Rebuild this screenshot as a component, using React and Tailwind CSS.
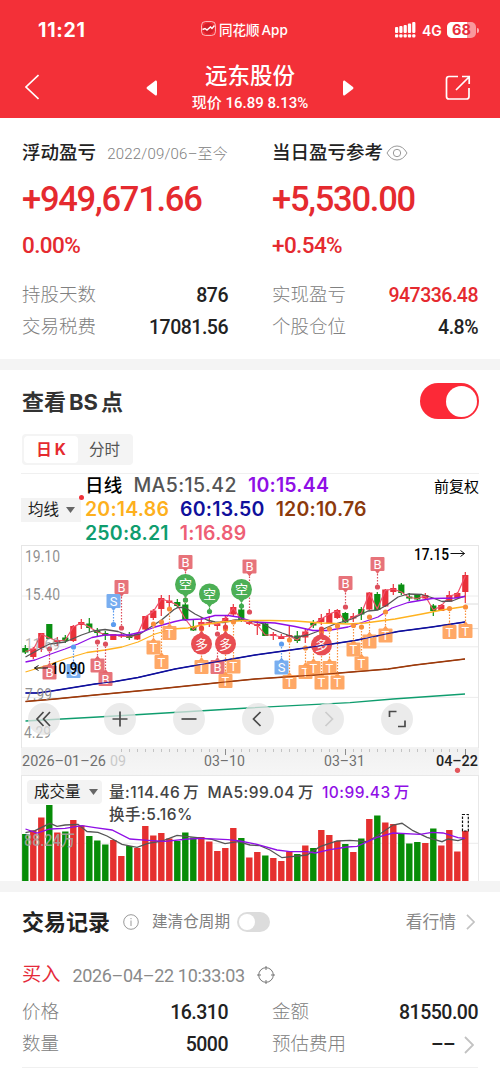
import clsx from "clsx";

// x of every candle is START + index * STEP, y values are screen rows
const START = 25.3;
const STEP = 8;

// [up, bodyTop, bodyBottom, wickTop, wickBottom, volumeTop]
const days = [
  [0, 648, 652.5, 645, 654, 834],
  [1, 648.5, 657, 647, 659, 830.5],
  [1, 633, 648, 633, 652, 817.5],
  [0, 624, 639, 624, 639, 805],
  [1, 640, 642, 637, 646, 832.5],
  [0, 637.5, 641, 635, 643, 831.5],
  [1, 626, 641, 625, 642, 820],
  [1, 622, 625, 619, 629, 825.5],
  [0, 623.5, 628, 618, 632, 836],
  [0, 631, 633, 628, 637, 840.5],
  [0, 633, 635.5, 631, 640, 844.5],
  [1, 634, 640, 634, 640, 840],
  [1, 635, 636.5, 633, 638, 856],
  [0, 635, 638, 632, 640, 846],
  [1, 634, 639.5, 632, 640, 848],
  [1, 616, 629.5, 616, 630, 826],
  [1, 610.5, 618, 609, 620, 835.5],
  [1, 598, 609, 595, 616, 833],
  [1, 600.5, 603, 595, 607, 838.5],
  [0, 602, 606, 599, 608, 841],
  [0, 604.5, 620, 603, 621, 832.5],
  [0, 626, 630.5, 620, 631, 837.5],
  [1, 622, 624.5, 617, 627, 837],
  [1, 622, 623.5, 616, 627, 841.5],
  [1, 623.5, 626, 622, 630, 851],
  [1, 618, 621, 615, 627, 848],
  [1, 607, 614.5, 604, 617, 828],
  [0, 609.5, 621, 608, 622, 838],
  [1, 622, 624, 620, 625, 857.5],
  [1, 624, 626, 620, 635, 852],
  [0, 623.5, 636, 622, 636, 855.5],
  [1, 634, 636, 632, 640, 858],
  [1, 636, 639, 634, 639, 861],
  [1, 635, 636.5, 626, 638, 851.5],
  [0, 635.5, 641, 631, 643, 854],
  [1, 631.5, 637.5, 628, 643, 845.5],
  [0, 623, 625.5, 620, 628, 848],
  [1, 618, 622, 614, 625, 830],
  [1, 613, 623.5, 609, 624, 835],
  [1, 610, 618, 609, 619, 841],
  [0, 613, 622.5, 612, 623, 844],
  [1, 616, 618.5, 613, 622, 852],
  [0, 609, 614.5, 607, 620, 838.5],
  [1, 592.5, 609.5, 592, 610, 819],
  [0, 594, 610, 592, 610, 815.5],
  [1, 589.5, 606.5, 589, 607, 822.5],
  [1, 588, 592, 584, 595, 824],
  [0, 584.5, 593, 583, 595, 833],
  [0, 596.5, 598.5, 593, 601, 843.5],
  [0, 595, 599.5, 594, 601, 842],
  [1, 595, 598.5, 593, 600, 843],
  [0, 605.5, 611, 604, 616, 828.5],
  [1, 605, 611, 604, 611, 845.5],
  [1, 595, 601.5, 591, 602, 830],
  [1, 593, 598, 592, 599, 851.5],
  [1, 575, 592, 572, 603, 831],
];

const closeLine = days
  .map(([up, top, bottom], i) => `${START + i * STEP},${up ? top + 1 : bottom - 1}`)
  .join(" ");

const averages = [
  {
    color: "#555555",
    points:
      "25.5,657 41.5,648 49.5,644 65,642 81.5,635 93,631 105,629.5 118,631.5 130,636 140,634 151.5,626.5 161.5,620 174,609.5 178,607.5 185,607.5 195,614 207,620 215,622 223,622.5 235,620 245,620 263,623.5 272,629 282,633 295,637.5 308,635 320,630.5 335,624 352,619 368,611 378,610 387,605 398,597 408,594 422,594.5 433,598 442,601.5 452,601 465,596",
  },
  {
    color: "#8f0fe6",
    points:
      "25.5,662 35,660 48,655 65,649 78,644 92,637.5 105,635 128,635 142,632 155,627 175,621.5 182,620 202,619 215,615.5 228,615.5 238,617 255,622 275,623 295,626.5 313,630.5 328,630.5 348,627 362,622.5 378,617 392,608 408,602.5 432,598.5 455,598 465,596.5",
  },
  {
    color: "#ffb21f",
    points:
      "25.5,672 48,665 65,659 87,652.5 105,650 122,647 138,642 155,634 172,629 188,628 202,625 222,622 245,620.5 270,620.5 295,621 322,623 348,624 365,623 395,619 422,614 442,610 465,606.5",
  },
  {
    color: "#10109c",
    points:
      "25.5,693 38,693 55,690.5 95,684 115,681.5 138,677.5 175,669 215,662 255,655 305,648 355,640.5 398,631.5 432,627 465,622",
  },
  {
    color: "#9c3a0c",
    points: "25.5,701.5 55,699 95,695 148,690 225,682 255,679 315,675 388,669 415,665 465,659",
  },
  {
    color: "#0f9d6e",
    points: "25.5,721 98,717 182,712 248,708 350,702.7 393,699 465,694",
  },
];

const volumeAverages = [
  {
    color: "#555555",
    points:
      "25.5,832.7 35,830.7 50,823.3 57,826.3 65,825 78,824.3 87,831.5 98,832.3 107,836 122,844.3 137,847.3 148,843.3 162,841 177,835.3 195,837.3 212,839.3 225,843.7 238,841.7 250,845 260,845.7 270,850 282,857.7 307,855 320,846.7 337,841 350,840.3 367,841.7 377,836 393,825 402,823.3 413,830.7 427,837.3 442,841.7 448,839 458,840.7 465,838.3",
  },
  {
    color: "#8f0fe6",
    points:
      "25.5,829 37,833 50,829 65,828.3 82,825.7 95,827.7 112,830 130,839 148,840.3 165,841.3 188,839 202,838.3 228,839.7 240,841 257,844.3 277,850 290,851.7 307,851.7 315,853 330,849.7 347,847 357,846.3 377,837.3 393,833 420,834.3 432,832.3 443,833 458,837.7 465,838.3",
  },
];

const markColors = { B: "#e4646c", S: "#6aa5ee", T: "#ff9f55", 空: "#4caf55", 多: "#e84d52" };
const dotColors = { B: "#dd4f5c", S: "#5b9cf0", T: "#f98f3a", 空: "#3faa4d", 多: "#e8443f" };

// [label, x, y, row of the anchor dot]
const marks = [
  ["B", 121.5, 587, 628],
  ["S", 113.5, 601, 624.5],
  ["B", 185.5, 562, 600],
  ["B", 249.5, 566.5, 612],
  ["B", 345.5, 583, 607],
  ["B", 377.5, 564, 587],
  ["空", 185.5, 584.5, 600],
  ["空", 209.5, 594, 611.5],
  ["空", 241.5, 589.5, 606],
  ["B", 49.5, 672.5, 649],
  ["S", 73.5, 671, 647],
  ["B", 97.5, 665.5, 642],
  ["B", 105.5, 679, 644],
  ["T", 153.5, 647.5, 624],
  ["T", 161.5, 662, 622],
  ["T", 169.5, 633, 609],
  ["T", 201.5, 667, 629],
  ["B", 217.5, 667, 634],
  ["T", 225.5, 681, 629],
  ["T", 233.5, 666.5, 622],
  ["多", 201.5, 644, 628],
  ["多", 225.5, 644, 627],
  ["S", 281.5, 667.5, 644],
  ["T", 289.5, 682, 640],
  ["T", 305.5, 672, 648],
  ["T", 313.5, 668, 645],
  ["T", 321.5, 682.5, 632],
  ["T", 329.5, 668, 629],
  ["T", 337.5, 682.5, 626],
  ["多", 321.5, 645, 629],
  ["T", 353.5, 649.5, 625.5],
  ["T", 361.5, 663.5, 627],
  ["T", 369.5, 641.5, 617],
  ["T", 385.5, 635.5, 612],
  ["T", 449.5, 632, 608.5],
  ["T", 465.5, 631, 607],
];

const DIN = "[font-family:Roboto,'Noto_Sans_CJK_SC',sans-serif]";
const SF = "[font-family:Inter,'Noto_Sans_CJK_SC',sans-serif]";

function Mark({ mark: [label, x, y, dot] }) {
  const round = label === "空" || label === "多";
  const dir = dot > y ? 1 : -1;
  const half = round ? 10.5 : 7;
  const color = markColors[label];
  return (
    <g>
      <line
        x1={x}
        x2={x}
        y1={y + dir * half}
        y2={dot}
        stroke={dotColors[label]}
        strokeWidth="1.2"
        strokeDasharray="1.5 1.5"
      />
      <circle cx={x} cy={dot} r="2.6" fill={dotColors[label]} />
      <path
        d={`M${x - 3} ${y + dir * (half - 1)}L${x} ${y + dir * (half + 3)}L${x + 3} ${y + dir * (half - 1)}Z`}
        fill={color}
      />
      {round ? (
        <circle cx={x} cy={y} r={half} fill={color} />
      ) : (
        <rect x={x - 7} y={y - 7} width="14" height="14" rx="1" fill={color} fillOpacity="0.9" />
      )}
      <text x={x} y={y + 4.6} textAnchor="middle" fill="#fff" fontSize="13" fontWeight="400">
        {label}
      </text>
    </g>
  );
}

// text squeezed to a fixed width, glyphs included
function Label({ children, ...props }) {
  return (
    <text lengthAdjust="spacingAndGlyphs" {...props}>
      {children}
    </text>
  );
}

function PriceChart() {
  return (
    <svg width="458" height="204" viewBox="21 545 458 204" className={clsx("block", DIN)}>
      <rect x="21.5" y="545.5" width="457" height="202.5" fill="#fff" stroke="#e6e6e6" />
      {[596, 646.8, 697.4].map((y) => (
        <line key={y} x1="22" x2="478" y1={y} y2={y} stroke="#ececec" />
      ))}
      <line x1="465" x2="478" y1="604" y2="604" stroke="#dcdcdc" />
      <line x1="465" x2="478" y1="628.6" y2="628.6" stroke="#dcdcdc" />
      {days.map(([up, top, bottom, high, low], i) => (
        <g key={i} fill={up ? "#e9303a" : "#0a8f12"}>
          <rect x={START + i * STEP - 0.6} y={high} width="1.2" height={low - high} />
          <rect x={START + i * STEP - 3.1} y={top} width="6.2" height={bottom - top} />
        </g>
      ))}
      <polyline points={closeLine} fill="none" stroke="#f0506a" strokeWidth="1.2" />
      {averages.map((line) => (
        <polyline
          key={line.color}
          points={line.points}
          fill="none"
          stroke={line.color}
          strokeWidth="1.3"
          strokeLinejoin="round"
        />
      ))}
      {marks.map((mark) => (
        <Mark key={`${mark[0]}${mark[1]}`} mark={mark} />
      ))}
      {averages.slice(3, 5).map((line) => (
        <polyline key={line.color} points={line.points} fill="none" stroke={line.color} strokeWidth="1.2" />
      ))}
      <g fill="#8a8a8a" fillOpacity="0.95" fontSize="16">
        <Label x="25" y="561.5" textLength="35">19.10</Label>
        <Label x="25" y="599.5" textLength="35">15.40</Label>
        <Label x="25" y="649.5" textLength="35" fillOpacity="0.65">11.69</Label>
        <Label x="25" y="700" textLength="27">7.99</Label>
        <Label x="24" y="738" textLength="27">4.29</Label>
      </g>
      <path d="M48 668H34.5M38.5 665.5L34.5 668L38.5 670.5" fill="none" stroke="#111" />
      <Label x="51" y="674" textLength="34" fontSize="16" fontWeight="500" fill="#000">
        10.90
      </Label>
      <Label x="414" y="559.5" textLength="35" fontSize="16" fontWeight="500" fill="#000">
        17.15
      </Label>
      <path d="M450.5 553.5H464.5M460.5 550.5L464.5 553.5L460.5 556.5" fill="none" stroke="#111" />
    </svg>
  );
}

function VolumeChart() {
  return (
    <svg width="458" height="106" viewBox="21 775 458 106" className={clsx("block", DIN)}>
      <rect x="21.5" y="775.5" width="457" height="110" fill="#fff" stroke="#e8e8e8" />
      <line x1="22" x2="478" y1="843.3" y2="843.3" stroke="#ececec" />
      {days.map(([up, , , , , top], i) => (
        <rect
          key={i}
          x={START + i * STEP - 3.2}
          y={top}
          width="6.4"
          height={881 - top}
          fill={up ? "#e5302f" : "#078c07"}
        />
      ))}
      <rect
        x="462.5"
        y="814.5"
        width="5.8"
        height="16.5"
        fill="#fff"
        stroke="#111"
        strokeWidth="1.2"
        strokeDasharray="2.5 1.5"
      />
      {volumeAverages.map((line) => (
        <polyline key={line.color} points={line.points} fill="none" stroke={line.color} strokeWidth="1.3" />
      ))}
      <Label x="24" y="846" textLength="51" fontSize="16" fill="#a3a3a3" fillOpacity="0.9">
        88.24万
      </Label>
    </svg>
  );
}

function TimeAxis() {
  const ticks = [];
  for (let x = 121.5; x < 470; x += STEP) ticks.push(x);
  return (
    <svg width="458" height="26" viewBox="21 749 458 26" className={clsx("block", DIN)}>
      <defs>
        <linearGradient id="axis" x2="0" y2="1">
          <stop offset="0" stopColor="#f1f1f1" />
          <stop offset="1" stopColor="#f6f6f6" />
        </linearGradient>
      </defs>
      <rect x="21" y="749" width="458" height="26" fill="url(#axis)" />
      {ticks.map((x) => (
        <line
          key={x}
          x1={x}
          x2={x}
          y1="748"
          y2={x === 225.5 || x === 345.5 || x === 465.5 ? 755 : 752}
          stroke={x === 225.5 || x === 345.5 || x === 465.5 ? "#8c8c8c" : "#c4c4c4"}
        />
      ))}
      <g fontSize="15" fill="#707070">
        <Label x="22" y="766.3" textLength="84">2026–01–26</Label>
        <Label x="110" y="766.3" textLength="16" fill="#c9c9c9">09</Label>
        <Label x="204" y="766.3" textLength="41">03–10</Label>
        <Label x="324" y="766.3" textLength="41">03–31</Label>
        <Label x="436" y="766.3" textLength="42" fontWeight="500" fill="#222">04–22</Label>
      </g>
      <circle cx="457.5" cy="770.3" r="2.6" fill="#e2555a" />
    </svg>
  );
}

function ToolButton({ className, d, color = "#4a4a4a" }) {
  return (
    <button className={clsx("h-8 w-8 rounded-full bg-[#e4e4e4]/75", className)}>
      <svg width="32" height="32" viewBox="0 0 32 32" fill="none" stroke={color} strokeWidth="1.7">
        <path d={d} />
      </svg>
    </button>
  );
}

function Row({ label, value, valueClass = "text-[#222]", arrow }) {
  return (
    <div className="flex h-8 items-center justify-between">
      <span className="relative top-[2px] text-[18.5px] font-light text-[#808080]">{label}</span>
      <span
        className={clsx(
          "relative top-[2px] flex items-center text-[19.5px] font-medium tracking-[-0.5px]",
          valueClass
        )}
      >
        {value}
        {arrow && <Chevron className="ml-[9px] mr-1 h-[18px] w-[10px]" />}
      </span>
    </div>
  );
}

function Chevron({ className }) {
  return (
    <svg viewBox="0 0 10 18" fill="none" stroke="#c2c2c2" strokeWidth="1.8" className={className}>
      <path d="M1 1L9 9L1 17" />
    </svg>
  );
}

function Header() {
  return (
    <header className="h-[118px] bg-[#f33038] text-white">
      <div className={clsx("flex h-[60px] items-center", SF)}>
        <div className="w-[201px] pl-[38px] pt-0.5 text-[19.5px] font-bold tracking-[0.75px]">11:21</div>
        <div className="flex w-[194px] items-center">
          <svg width="15" height="15" viewBox="0 0 15 15" fill="none" stroke="#fff" className="-mt-1">
            <rect x="0.5" y="0.5" width="14" height="14" rx="4" strokeOpacity="0.65" />
            <circle cx="7.5" cy="7.5" r="5.5" fill="#d01e29" stroke="none" />
            <path d="M1.5 8.5L4 7.5L6 9L9.5 6L11 7.5L13.5 4.5" strokeWidth="1.4" />
          </svg>
          <span className="ml-[3px] text-[13.5px] font-medium">同花顺</span>
          <span className="ml-[2px] text-[13.5px] font-medium">App</span>
        </div>
        <svg width="22" height="16" viewBox="0 0 22 16" fill="#fff">
          {[5, 4, 3, 1.5, 0].map((y, i) => (
            <g key={y}>
              <rect x={i * 4.3} y={y} width="3.2" height={11 - y} rx="1" />
              <rect x={i * 4.3} y="12.2" width="3.2" height="3.2" rx="1" />
            </g>
          ))}
        </svg>
        <span className="ml-[5px] w-5 text-[14px] font-semibold">4G</span>
        <div className="relative ml-[5px] h-4 w-[29px] overflow-hidden rounded-[5px] bg-white/50">
          <div className="h-4 w-[20px] bg-white" />
          <span className="absolute inset-0 text-center text-[14.5px] font-bold leading-4 text-[#e62f3b]">68</span>
        </div>
        <div className="ml-px h-[5px] w-[2px] rounded-r bg-white/60" />
      </div>
      <div className={clsx("flex h-[58px] items-start pl-[25px]", DIN)}>
        <svg
          width="14"
          height="26"
          viewBox="0 0 14 26"
          fill="none"
          stroke="#fff"
          strokeWidth="1.6"
          className="mt-[14px]"
        >
          <path d="M13.5 1L1 13L13.5 25" />
        </svg>
        <svg width="11" height="16" viewBox="0 0 11 16" fill="#fff" className="ml-[107px] mt-5">
          <path d="M9.5 0.5Q11 0 11 2V14Q11 16 9.5 15.5L1 9Q0 8 1 7Z" />
        </svg>
        <div className="flex w-[186px] flex-col items-center">
          <div className="mt-px h-[30px] text-[22.5px] font-medium leading-[30px]">远东股份</div>
          <div className="h-5 whitespace-nowrap text-[15px] font-medium leading-6">现价 16.89 8.13%</div>
        </div>
        <svg width="11" height="16" viewBox="0 0 11 16" fill="#fff" className="mt-5">
          <path d="M1.5 0.5Q0 0 0 2V14Q0 16 1.5 15.5L10 9Q11 8 10 7Z" />
        </svg>
        <svg
          width="26"
          height="26"
          viewBox="0 0 26 26"
          fill="none"
          stroke="#fff"
          strokeWidth="1.7"
          className="ml-[91px] mt-[15px]"
        >
          <path d="M13 1.5H4Q1.5 1.5 1.5 4V21.5Q1.5 24 4 24H21.5Q24 24 24 21.5V13" />
          <path d="M11 15L24 2M17 1.5H24.2V9" />
        </svg>
      </div>
    </header>
  );
}

function Summary() {
  return (
    <section className={clsx("flex h-[241px] gap-11 px-[22px] pt-5", DIN)}>
      <div className="w-[206px]">
        <div className="flex h-8 items-center justify-between">
          <span className="text-[18.5px] font-medium text-[#222]">浮动盈亏</span>
          <span className="whitespace-nowrap text-[15px] font-light tracking-[0.2px] text-[#808080]">
            2022/09/06–至今
          </span>
        </div>
        <div className="h-[60px] text-[34.5px] font-medium leading-[58px] tracking-[-1.25px] text-[#e52a2f]">
          +949,671.66
        </div>
        <div className="h-[31px] text-[22.5px] font-medium leading-[31px] tracking-[-0.6px] text-[#e52a2f]">0.00%</div>
        <div className="mt-[17px]">
          <Row label="持股天数" value="876" />
          <Row label="交易税费" value="17081.56" />
        </div>
      </div>
      <div className="w-[206px]">
        <div className="flex h-8 items-center">
          <span className="text-[18.5px] font-medium text-[#222]">当日盈亏参考</span>
          <svg width="22" height="16" viewBox="0 0 22 16" fill="none" stroke="#999" className="mb-0.5 ml-[3px]">
            <path d="M1 8Q5 1 11 1T21 8Q17 15 11 15T1 8Z" />
            <circle cx="11" cy="8" r="3.7" />
          </svg>
        </div>
        <div className="h-[60px] text-[34.5px] font-medium leading-[58px] tracking-[-1.25px] text-[#e52a2f]">
          +5,530.00
        </div>
        <div className="h-[31px] text-[22.5px] font-medium leading-[31px] tracking-[-0.6px] text-[#e52a2f]">+0.54%</div>
        <div className="mt-[17px]">
          <Row label="实现盈亏" value="947336.48" valueClass="text-[#e52a2f]" />
          <Row label="个股仓位" value="4.8%" />
        </div>
      </div>
    </section>
  );
}

function ChartSection() {
  return (
    <section className={SF}>
      <div className="flex h-16 items-center justify-between pl-[22px] pr-[21px]">
        <h2 className="flex gap-[3px] text-[22px] font-bold text-[#333]">
          <span>查看</span>
          <span>BS</span>
          <span>点</span>
        </h2>
        <div className="mb-0.5 flex h-9 w-[59px] items-center justify-end rounded-full bg-[#fc2937] px-[2px]">
          <div className="h-[31px] w-[31px] rounded-full bg-white" />
        </div>
      </div>
      <div className="ml-[22px] flex h-[31px] w-[111px] items-center rounded bg-[#f4f4f4] p-0.5 text-[15.5px]">
        <div className="flex h-[27px] w-[54px] items-center justify-center gap-[3px] rounded bg-white font-bold text-[#e52a2f]">
          <span>日</span>
          <span>K</span>
        </div>
        <div className="flex-1 pl-[11px] text-[#555]">分时</div>
      </div>
      <div className="mx-[21px] mt-2 flex h-[72px] border-t border-[#f0f0f0]">
        <div className="relative mt-6 flex h-6 w-[60px] items-center bg-[#f3f3f3] pl-[7px] text-[15.5px] text-[#222]">
          均线
          <svg width="9" height="6" viewBox="0 0 9 6" fill="#666" className="ml-[7px]">
            <path d="M0 0H9L4.5 6Z" />
          </svg>
          <span className="absolute -right-[3px] -top-[3px] h-[5px] w-[5px] rounded-full bg-[#f03038]" />
        </div>
        <div className="ml-1 flex-1 whitespace-nowrap text-[19.5px] font-semibold leading-6 tracking-[0.2px]">
          <div className="-mt-px flex h-6 gap-[11px]">
            <span className="text-[18.5px] font-medium text-black">日线</span>
            <span className="font-medium tracking-[0.4px] text-[#555]">MA5:15.42</span>
            <span className="text-[#8f0fe6]">10:15.44</span>
          </div>
          <div className="flex h-6 gap-[11px]">
            <span className="text-[#fdb01e]">20:14.86</span>
            <span className="text-[#10109c]">60:13.50</span>
            <span className="text-[#8c3a0c]">120:10.76</span>
          </div>
          <div className="flex h-6 gap-[11px]">
            <span className="text-[#0f9d6e]">250:8.21</span>
            <span className="text-[#ee5f76]">1:16.89</span>
          </div>
        </div>
        <div className="pt-[2px] text-[15px] text-black">前复权</div>
      </div>
      <div className="relative mx-[21px]">
        <PriceChart />
        <div className="absolute left-[7px] top-[158px] flex">
          <ToolButton d="M15.5 9L9 16L15.5 23M22 9L15.5 16L22 23" />
          <ToolButton className="ml-11" d="M16 8.5V23.5M8.5 16H23.5" />
          <ToolButton className="ml-[37px]" d="M8.5 16H23.5" />
          <ToolButton className="ml-[37px]" d="M18.5 9L11.5 16L18.5 23" />
          <ToolButton className="ml-[38px]" d="M13.5 9L20.5 16L13.5 23" color="#cccccc" />
          <ToolButton className="ml-[37px]" d="M8.5 14V8.5H15.5M24 17.5V23.5H17" />
        </div>
      </div>
      <div className="mx-[21px]">
        <TimeAxis />
      </div>
      <div className="relative mx-[21px] text-[15.5px] font-medium">
        <VolumeChart />
        <div className="absolute left-1.5 top-[5px] flex h-6 w-[75px] items-center rounded-sm bg-[#f3f3f3] pl-[7px] font-normal text-[#222]">
          成交量
          <svg width="9" height="6" viewBox="0 0 9 6" fill="#666" className="ml-2">
            <path d="M0 0H9L4.5 6Z" />
          </svg>
        </div>
        <div className="absolute left-[88px] top-[7px] whitespace-nowrap leading-[22px] tracking-[0.5px] text-[#444]">
          <div className="flex gap-2">
            <span>
              量:114.46<span className="ml-[3px]">万</span>
            </span>
            <span>
              MA5:99.04<span className="ml-[3px]">万</span>
            </span>
            <span className="text-[#8f0fe6]">
              10:99.43<span className="ml-[3px]">万</span>
            </span>
          </div>
          <div>换手:5.16%</div>
        </div>
      </div>
    </section>
  );
}

function Records() {
  return (
    <section className={clsx("px-[22px]", DIN)}>
      <div className="flex h-[60px] items-center">
        <h2 className="text-[22px] font-bold text-[#222]">交易记录</h2>
        <svg width="16" height="16" viewBox="0 0 16 16" fill="none" stroke="#999" className="ml-[13px]">
          <circle cx="8" cy="8" r="7.3" />
          <path d="M8 6.5V12M8 4V5.2" />
        </svg>
        <span className="ml-[13px] pt-0.5 text-[15.6px] text-[#808080]">建清仓周期</span>
        <div className="ml-[7px] flex h-5 w-[33px] items-center rounded-full bg-[#dcdcdc] p-[2px]">
          <div className="h-4 w-4 rounded-full bg-white" />
        </div>
        <span className="ml-auto pt-0.5 text-[16.8px] text-[#888]">看行情</span>
        <Chevron className="ml-[10px] mr-[3px] h-4 w-[9px]" />
      </div>
      <div className="-mb-[3px] flex h-[46px] items-center">
        <span className="text-[19.2px] text-[#e52a3a]">买入</span>
        <span className="ml-3 whitespace-nowrap text-[18px] tracking-[-0.32px] text-[#8a8a8a]">
          2026–04–22 10:33:03
        </span>
        <svg width="18" height="18" viewBox="0 0 18 18" fill="none" stroke="#777" className="ml-[12px]">
          <circle cx="9" cy="9" r="7.3" />
          <path d="M9 0V4M9 14V18M0 9H4M14 9H18" />
        </svg>
      </div>
      <div className="flex gap-11">
        <div className="w-[206px]">
          <Row label="价格" value="16.310" />
          <Row label="数量" value="5000" />
        </div>
        <div className="w-[206px]">
          <Row label="金额" value="81550.00" />
          <Row label="预估费用" value="––" arrow />
        </div>
      </div>
      <div className="mt-2 border-t border-[#f0f0f0]" />
    </section>
  );
}

export default function App() {
  return (
    <div className="h-[1083px] w-[500px] overflow-hidden bg-white">
      <Header />
      <Summary />
      <div className="h-[11px] bg-[#f4f4f4]" />
      <ChartSection />
      <div className="h-[11px] bg-[#f4f4f4]" />
      <Records />
    </div>
  );
}
